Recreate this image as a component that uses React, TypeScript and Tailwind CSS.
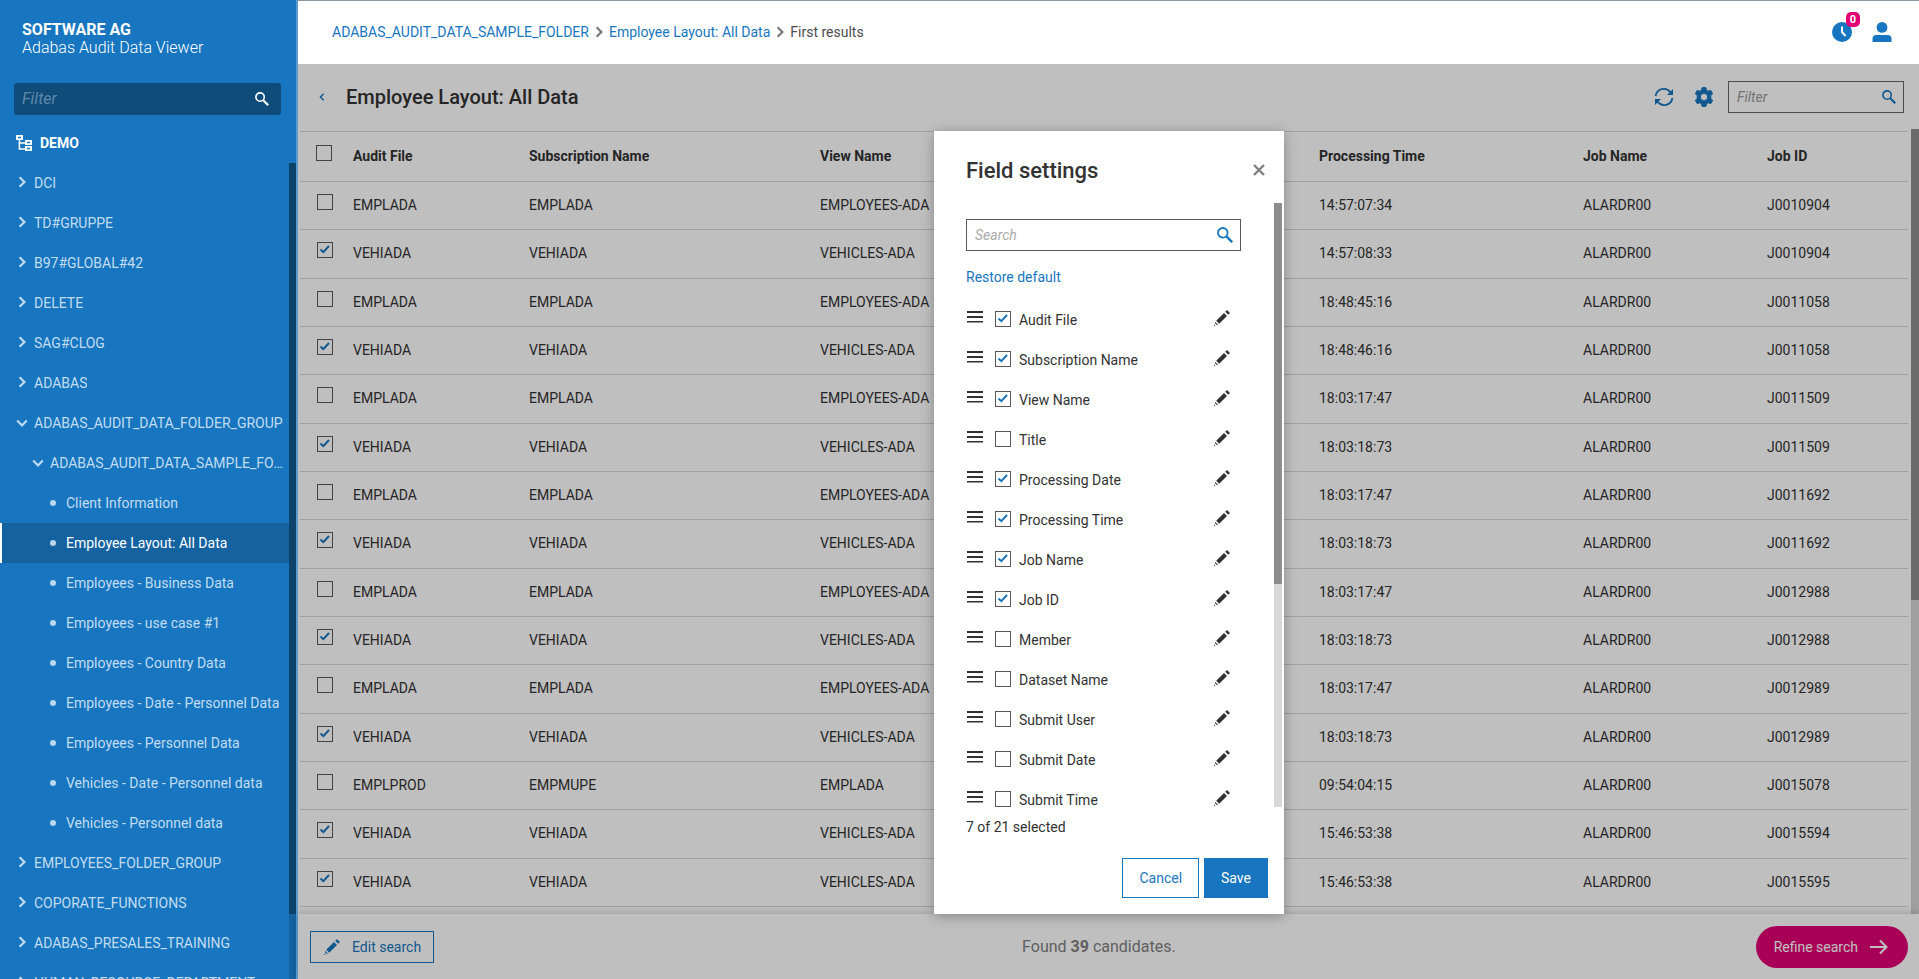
import type { ReactNode } from "react";
import clsx from "clsx";

const ROWS = [
    ["EMPLADA", "EMPLADA", "EMPLOYEES-ADA", "14:57:07:34", "ALARDR00", "J0010904"],
    ["VEHIADA", "VEHIADA", "VEHICLES-ADA", "14:57:08:33", "ALARDR00", "J0010904"],
    ["EMPLADA", "EMPLADA", "EMPLOYEES-ADA", "18:48:45:16", "ALARDR00", "J0011058"],
    ["VEHIADA", "VEHIADA", "VEHICLES-ADA", "18:48:46:16", "ALARDR00", "J0011058"],
    ["EMPLADA", "EMPLADA", "EMPLOYEES-ADA", "18:03:17:47", "ALARDR00", "J0011509"],
    ["VEHIADA", "VEHIADA", "VEHICLES-ADA", "18:03:18:73", "ALARDR00", "J0011509"],
    ["EMPLADA", "EMPLADA", "EMPLOYEES-ADA", "18:03:17:47", "ALARDR00", "J0011692"],
    ["VEHIADA", "VEHIADA", "VEHICLES-ADA", "18:03:18:73", "ALARDR00", "J0011692"],
    ["EMPLADA", "EMPLADA", "EMPLOYEES-ADA", "18:03:17:47", "ALARDR00", "J0012988"],
    ["VEHIADA", "VEHIADA", "VEHICLES-ADA", "18:03:18:73", "ALARDR00", "J0012988"],
    ["EMPLADA", "EMPLADA", "EMPLOYEES-ADA", "18:03:17:47", "ALARDR00", "J0012989"],
    ["VEHIADA", "VEHIADA", "VEHICLES-ADA", "18:03:18:73", "ALARDR00", "J0012989"],
    ["EMPLPROD", "EMPMUPE", "EMPLADA", "09:54:04:15", "ALARDR00", "J0015078"],
    ["VEHIADA", "VEHIADA", "VEHICLES-ADA", "15:46:53:38", "ALARDR00", "J0015594"],
    ["VEHIADA", "VEHIADA", "VEHICLES-ADA", "15:46:53:38", "ALARDR00", "J0015595"],
];

const FIELDS = [
    { name: "Audit File", checked: true },
    { name: "Subscription Name", checked: true },
    { name: "View Name", checked: true },
    { name: "Title", checked: false },
    { name: "Processing Date", checked: true },
    { name: "Processing Time", checked: true },
    { name: "Job Name", checked: true },
    { name: "Job ID", checked: true },
    { name: "Member", checked: false },
    { name: "Dataset Name", checked: false },
    { name: "Submit User", checked: false },
    { name: "Submit Date", checked: false },
    { name: "Submit Time", checked: false },
];

type Node = { label: string; kind: "closed" | "open" | "nested" | "leaf"; active?: boolean };

const TREE: Node[] = [
    { label: "DCI", kind: "closed" },
    { label: "TD#GRUPPE", kind: "closed" },
    { label: "B97#GLOBAL#42", kind: "closed" },
    { label: "DELETE", kind: "closed" },
    { label: "SAG#CLOG", kind: "closed" },
    { label: "ADABAS", kind: "closed" },
    { label: "ADABAS_AUDIT_DATA_FOLDER_GROUP", kind: "open" },
    { label: "ADABAS_AUDIT_DATA_SAMPLE_FOLDER", kind: "nested" },
    { label: "Client Information", kind: "leaf" },
    { label: "Employee Layout: All Data", kind: "leaf", active: true },
    { label: "Employees - Business Data", kind: "leaf" },
    { label: "Employees - use case #1", kind: "leaf" },
    { label: "Employees - Country Data", kind: "leaf" },
    { label: "Employees - Date - Personnel Data", kind: "leaf" },
    { label: "Employees - Personnel Data", kind: "leaf" },
    { label: "Vehicles - Date - Personnel data", kind: "leaf" },
    { label: "Vehicles - Personnel data", kind: "leaf" },
    { label: "EMPLOYEES_FOLDER_GROUP", kind: "closed" },
    { label: "COPORATE_FUNCTIONS", kind: "closed" },
    { label: "ADABAS_PRESALES_TRAINING", kind: "closed" },
    { label: "HUMAN_RESOURCE_DEPARTMENT", kind: "closed" },
];

/* Icons */

function Svg({ className, box = 16, children }: { className: string; box?: number; children: ReactNode }) {
    return (
        <svg viewBox={`0 0 ${box} ${box}`} className={clsx("shrink-0", className)} fill="currentColor" aria-hidden="true">
            {children}
        </svg>
    );
}

function SearchIcon({ className }: { className: string }) {
    return (
        <Svg className={className}>
            <circle cx="5.8" cy="5.8" r="4.8" fill="none" stroke="currentColor" strokeWidth="1.8" />
            <path d="M8.6 10.2 10.2 8.6 16 14.2 14.2 16Z" />
        </Svg>
    );
}

function PencilIcon({ className }: { className: string }) {
    return (
        <Svg className={className}>
            <path d="M10 3 13 6 5.2 13.8 2.2 10.8Z" />
            <path d="M11.2 1.8 12.500.5Q13 0 13.500.5L15.5 2.5Q16 3 15.5 3.5L14.2 4.8Z" />
            <path d="M1.3 11.9 4.100 14.7 2.600 15.100 2.100 13.900 .900 13.400Z" />
            <path d="M.4 14.4 1.6 15.6 0 16Z" />
        </Svg>
    );
}

function ChevronIcon({ className }: { className: string }) {
    return (
        <Svg className={className} box={10}>
            <path d="M3 1 7 5 3 9" fill="none" stroke="currentColor" strokeWidth="1.8" />
        </Svg>
    );
}

function TreeIcon() {
    return (
        <Svg className="size-4">
            <path d="M0 0h7v5H4.2v2.2H9V5h7v5H9V8.8H4.2v4.4H9V11h7v5H9v-1.2H2.6V5H0ZM2 1.8v1.4h3V1.8ZM11 6.8v1.4h3V6.8ZM11 12.8v1.4h3v-1.4Z" fillRule="evenodd" />
        </Svg>
    );
}

function RefreshIcon() {
    return (
        <Svg className="size-5" box={20}>
            <path d="M1.6 9A8.3 8.3 0 0 1 16.4 5.2M18.4 11A8.3 8.3 0 0 1 3.6 14.8" fill="none" stroke="currentColor" strokeWidth="1.8" />
            <path d="M19 2V8h-6ZM1 18V12h6Z" />
        </Svg>
    );
}

function GearIcon() {
    return (
        <Svg className="size-5" box={20}>
            <path
                fillRule="evenodd"
                d="M8.1 .6h3.8l.6 2.7 1.6.9L16.800 3.4l1.900 3.3-2 1.900q.2 1.400 0 2.800l2 1.900L16.800 16.600l-2.700-.8-1.600.9L11.900 19.400H8.100l-.6-2.700-1.600-.9-2.700.8L1.300 13.300l2-1.900q-.2-1.400 0-2.800l-2-1.900L3.200 3.400l2.700.8 1.600-.9ZM10 6.300a3.700 3.700 0 1 0 0 7.400 3.700 3.700 0 0 0 0-7.400Z"
                stroke="currentColor"
                strokeLinejoin="round"
            />
        </Svg>
    );
}

function ClockIcon() {
    return (
        <Svg className="size-5" box={20}>
            <circle cx="10" cy="10" r="10" />
            <path d="M10 4.5V10l3.6 4" fill="none" stroke="#fff" strokeWidth="2" />
        </Svg>
    );
}

function UserIcon() {
    return (
        <Svg className="size-5" box={20}>
            <circle cx="10" cy="5.4" r="5.4" />
            <path d="M4.5 13h11a4 4 0 0 1 4 4v3H.5v-3a4 4 0 0 1 4-4Z" />
        </Svg>
    );
}

/* Small shared controls */

function Checkbox({ id, label, checked }: { id: string; label?: string; checked?: boolean }) {
    return (
        <span className="relative block size-4 shrink-0">
            <input
                id={id}
                type="checkbox"
                aria-label={label}
                defaultChecked={checked}
                className="peer block size-4 appearance-none border border-[#5a5a5a] bg-white"
            />
            <svg viewBox="0 0 16 16" className="pointer-events-none absolute inset-0 hidden size-4 text-[#1776bf] peer-checked:block" aria-hidden="true">
                <path d="M3.5 7.6 6.3 10.2 12 4" fill="none" stroke="currentColor" strokeWidth="2" />
            </svg>
        </span>
    );
}

function Sidebar() {
    return (
        <aside className="flex w-[298px] shrink-0 flex-col border-r-2 border-[#5b9bd0] bg-[#1776bf] text-white">
            <div className="px-[22px] pt-[21px] text-base leading-[18px]">
                <div className="font-bold">SOFTWARE AG</div>
                <div className="font-light">Adabas Audit Data Viewer</div>
            </div>
            <div className="mt-[26px] mr-[15px] ml-[14px] flex h-8 items-center rounded-[3px] bg-[#0f4c7a] pr-3 pl-2">
                <input
                    aria-label="Filter folders"
                    placeholder="Filter"
                    className="min-w-0 flex-1 bg-transparent text-base outline-none placeholder:text-[#5e88a9] placeholder:italic"
                />
                <SearchIcon className="size-[14px]" />
            </div>
            <a href="#demo" className="mt-2 flex h-10 shrink-0 items-center gap-2 px-4 text-sm font-bold">
                <TreeIcon />
                DEMO
            </a>
            <div className="flex min-h-0 flex-1">
                <nav className="min-w-0 flex-1 overflow-hidden">
                    {TREE.map((node) => (
                        <a
                            key={node.label}
                            href="#folder"
                            className={clsx(
                                "flex h-10 items-center border-l-2 pr-1 text-sm",
                                node.active ? "border-white bg-[#1462a0] text-white" : "border-transparent text-[#c2dcf0]",
                                node.kind === "leaf" && "gap-[10px] pl-12",
                                node.kind === "nested" && "gap-[6px] pl-[30px]",
                                (node.kind === "closed" || node.kind === "open") && "gap-[6px] pl-[14px]",
                            )}
                        >
                            {node.kind === "leaf" ? (
                                <span className="size-[6px] shrink-0 rounded-full bg-[#b9d6ec]" />
                            ) : (
                                <ChevronIcon className={clsx("size-3", node.kind === "closed" ? "mb-[3px]" : "rotate-90")} />
                            )}
                            <span className="truncate">{node.label}</span>
                        </a>
                    ))}
                </nav>
                <div className="w-[7px] bg-[#1462a0]">
                    <div className="h-[92%] bg-[#0d426b]" />
                </div>
            </div>
        </aside>
    );
}

function Header() {
    return (
        <header className="flex h-16 shrink-0 items-center border-t border-[#8d98a2] bg-white pr-[27px] pb-[2px] pl-[34px]">
            <nav className="flex items-center gap-1 text-sm text-[#4c4c4c]" aria-label="Breadcrumb">
                <a href="#folder" className="text-[#1776bf]">ADABAS_AUDIT_DATA_SAMPLE_FOLDER</a>
                <ChevronIcon className="size-3 text-[#777]" />
                <a href="#layout" className="text-[#1776bf]">Employee Layout: All Data</a>
                <ChevronIcon className="size-3 text-[#777]" />
                <span>First results</span>
            </nav>
            <div className="ml-auto flex items-center gap-5 text-[#1776bf]">
                <button type="button" aria-label="Jobs" className="relative">
                    <ClockIcon />
                    <span className="absolute -top-[10px] left-[14px] flex h-[15px] w-[14px] items-center justify-center rounded-[5px] bg-[#e20074] text-[11px] leading-none font-bold text-white">
                        0
                    </span>
                </button>
                <button type="button" aria-label="Account">
                    <UserIcon />
                </button>
            </div>
        </header>
    );
}

function Toolbar() {
    return (
        <div className="flex h-[65px] shrink-0 items-center pr-[15px] pl-5">
            <button type="button" aria-label="Back" className="text-[#1776bf]">
                <ChevronIcon className="size-2 rotate-180" />
            </button>
            <h1 className="ml-5 text-xl font-medium">Employee Layout: All Data</h1>
            <div className="ml-auto flex items-center text-[#1776bf]">
                <button type="button" aria-label="Refresh">
                    <RefreshIcon />
                </button>
                <button type="button" aria-label="Settings" className="ml-5">
                    <GearIcon />
                </button>
                <div className="ml-[14px] flex h-8 w-44 items-center border border-[#666] pr-[7px] pl-2">
                    <input
                        aria-label="Filter results"
                        placeholder="Filter"
                        className="min-w-0 flex-1 bg-transparent text-sm text-[#323232] outline-none placeholder:text-[#999] placeholder:italic"
                    />
                    <SearchIcon className="size-[14px]" />
                </div>
            </div>
        </div>
    );
}

function ResultTable() {
    return (
        <table className="w-full table-fixed border-collapse text-left text-sm">
            <colgroup>
                <col className="w-[45px]" />
                <col className="w-[176px]" />
                <col className="w-[291px]" />
                <col />
                <col className="w-[264px]" />
                <col className="w-[184px]" />
                <col className="w-[149px]" />
            </colgroup>
            <thead>
                <tr className="h-[50px] border-y border-[#d4d4d4]">
                    <th className="pb-2 pl-4">
                        <Checkbox id="row-all" label="Select all" />
                    </th>
                    <th className="px-2 pb-[2px] font-bold">Audit File</th>
                    <th className="px-2 pb-[2px] font-bold">Subscription Name</th>
                    <th className="px-2 pb-[2px] font-bold">View Name</th>
                    <th className="px-2 pb-[2px] font-bold">Processing Time</th>
                    <th className="px-2 pb-[2px] font-bold">Job Name</th>
                    <th className="px-2 pb-[2px] font-bold">Job ID</th>
                </tr>
            </thead>
            <tbody>
                {ROWS.map((row, i) => (
                    <tr key={i} className="h-12 border-b border-[#d4d4d4] nth-[3n+2]:h-[49px]">
                        <td className="pb-2 pl-[17px]">
                            <Checkbox id={`row-${i}`} label={`Select row ${i + 1}`} checked={row[0] === "VEHIADA"} />
                        </td>
                        {row.map((cell, j) => (
                            <td key={j} className="px-2 pb-[2px]">
                                {cell}
                            </td>
                        ))}
                    </tr>
                ))}
            </tbody>
        </table>
    );
}

function Footer() {
    return (
        <footer className="flex h-[65px] shrink-0 items-center justify-between bg-white pr-[11px] pl-3 shadow-[0_-2px_6px_rgba(0,0,0,0.15)]">
            <button type="button" className="flex h-8 items-center gap-3 border border-[#1776bf] pr-3 pl-[13px] text-sm text-[#1776bf]">
                <PencilIcon className="size-4" />
                Edit search
            </button>
            <p className="pl-2 text-base text-[#808080]">
                Found <b>39</b> candidates.
            </p>
            <button type="button" className="flex h-[42px] items-center gap-3 rounded-full bg-[#e20074] pr-5 pl-[18px] text-sm text-white">
                Refine search
                <Svg className="size-[18px]" box={18}>
                    <path d="M0 9h16.5M10 2.5 16.5 9 10 15.5" fill="none" stroke="currentColor" strokeWidth="2" />
                </Svg>
            </button>
        </footer>
    );
}

function FieldSettings() {
    return (
        <section role="dialog" aria-label="Field settings" className="flex w-[350px] flex-col bg-white shadow-[0_2px_12px_rgba(0,0,0,0.3)]">
            <div className="flex h-[72px] shrink-0 items-center justify-between pt-[6px] pr-[19px] pl-8">
                <h2 className="text-[22px] font-medium">Field settings</h2>
                <button type="button" aria-label="Close" className="text-[#808080]">
                    <Svg className="size-3" box={12}>
                        <path d="M1 1 11 11M11 1 1 11" stroke="currentColor" strokeWidth="2.4" />
                    </Svg>
                </button>
            </div>
            <div className="flex min-h-0 flex-1">
                <div className="min-w-0 flex-1 overflow-hidden pt-4 pr-[33px] pl-8">
                    <div className="flex h-8 items-center border border-[#5a5a5a] pr-[7px] pl-2">
                        <input
                            aria-label="Search fields"
                            placeholder="Search"
                            className="min-w-0 flex-1 bg-transparent text-sm outline-none placeholder:text-[#aaa] placeholder:italic"
                        />
                        <SearchIcon className="size-4 text-[#1776bf]" />
                    </div>
                    <button type="button" className="mt-4 block text-sm text-[#1776bf]">
                        Restore default
                    </button>
                    <ul className="mt-3">
                        {FIELDS.map((field, i) => (
                            <li key={field.name} className="flex h-10 items-center pr-[11px]">
                                <Svg className="mb-1 size-[18px]" box={18}>
                                    <path d="M1 3h16v2H1ZM1 8h16v2H1ZM1 13h16v1.5H1Z" />
                                </Svg>
                                <span className="ml-[11px]">
                                    <Checkbox id={`field-${i}`} checked={field.checked} />
                                </span>
                                <label htmlFor={`field-${i}`} className="ml-2 flex-1 pt-[2px] text-sm leading-4">
                                    {field.name}
                                </label>
                                <button type="button" aria-label={`Edit ${field.name}`} className="pb-[2px]">
                                    <PencilIcon className="size-4" />
                                </button>
                            </li>
                        ))}
                    </ul>
                </div>
                <div className="mr-[2px] w-2 bg-[#d9d9d9]">
                    <div className="h-[63%] bg-[#8d8d8d]" />
                </div>
            </div>
            <div className="shrink-0 px-4 pt-[10px] pb-4">
                <p className="pl-4 text-sm">7 of 21 selected</p>
                <div className="mt-[21px] flex justify-end gap-[5px] text-sm">
                    <button type="button" className="h-10 border border-[#1776bf] px-4 text-[#1776bf]">
                        Cancel
                    </button>
                    <button type="button" className="h-10 bg-[#1776bf] px-[17px] text-white">
                        Save
                    </button>
                </div>
            </div>
        </section>
    );
}

export default function App() {
    return (
        <div className="flex h-screen overflow-hidden bg-white font-[Roboto,sans-serif] text-[#323232]">
            <Sidebar />
            <div className="flex min-w-0 flex-1 flex-col">
                <Header />
                <main className="relative flex min-h-0 flex-1 flex-col">
                    <Toolbar />
                    <div className="flex min-h-0 flex-1">
                        <div className="min-w-0 flex-1 overflow-hidden pt-[2px] pr-[3px] pl-[2px]">
                            <ResultTable />
                        </div>
                        <div className="w-2 bg-[#d4d4d4]">
                            <div className="h-3/5 bg-[#8f8f8f]" />
                        </div>
                    </div>
                    <Footer />
                    <div className="absolute inset-0 flex justify-center bg-black/25 pt-[67px] pb-[65px] pl-px">
                        <FieldSettings />
                    </div>
                </main>
            </div>
        </div>
    );
}
